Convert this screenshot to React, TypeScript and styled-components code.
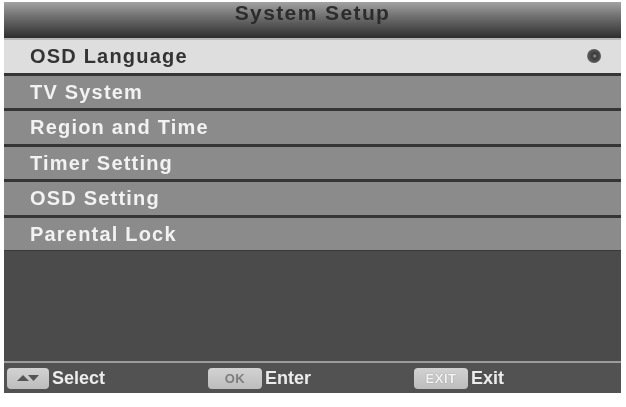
import styled, { createGlobalStyle } from 'styled-components';

const GlobalStyle = createGlobalStyle`
  html, body {
    margin: 0;
    padding: 0;
    background: #ffffff;
  }
  body {
    font-family: "Liberation Sans", Arial, sans-serif;
  }
`;

const Screen = styled.div`
  margin: 2px 0 0 4px;
  width: 617px;
  display: flex;
  flex-direction: column;
  background: #4a4a4a;
  filter: blur(0.5px);
`;

const TitleBar = styled.div`
  height: 36px;
  background: linear-gradient(#a2a2a2 0%, #707070 40%, #444 80%, #2e2e2e 100%);
  border-bottom: 2px solid #b8b8b8;
  text-align: center;
  font-size: 21px;
  font-weight: 700;
  line-height: 22px;
  letter-spacing: 1.4px;
  color: #2c2c2c;
  overflow: hidden;
`;

const MenuList = styled.div`
  display: flex;
  flex-direction: column;
`;

const MenuRow = styled.div<{ $active?: boolean }>`
  height: 32.5px;
  display: flex;
  align-items: center;
  justify-content: space-between;
  padding: 0 19px 0 26px;
  background: ${(p) => (p.$active ? '#dedede' : '#8b8b8b')};
  color: ${(p) => (p.$active ? '#333333' : '#f2f2f2')};
  font-size: 20px;
  font-weight: 700;
  letter-spacing: 1.2px;
  line-height: 32px;

  & + & {
    border-top: 3px solid #353535;
  }
`;

const Body = styled.div`
  height: 110px;
  background: #4b4b4b;
  border-top: 1px solid #3a3a3a;
`;

const Footer = styled.div`
  height: 30px;
  border-top: 2px solid #9c9c9c;
  background: #525252;
  display: grid;
  grid-template-columns: 201px 206px 1fr;
  align-items: center;
  padding-left: 3px;
`;

const Hint = styled.div`
  display: flex;
  align-items: center;
  gap: 3px;
  color: #ececec;
  font-size: 18px;
  font-weight: 700;
`;

const Key = styled.span<{ $dim?: boolean }>`
  width: 54px;
  height: 21px;
  border-radius: 4px;
  background: linear-gradient(#d2d2d2, #bdbdbd);
  display: flex;
  align-items: center;
  justify-content: center;
  color: ${(p) => (p.$dim ? '#7e7e7e' : '#f4f4f4')};
  font-size: 13px;
  font-weight: 700;
  letter-spacing: 0.5px;
  text-shadow: ${(p) => (p.$dim ? 'none' : '0 0 1px #777')};
`;

const ArrowKey = styled(Key)`
  width: 42px;
`;

const Bullet = () => (
  <svg width="16" height="16" viewBox="0 0 16 16" aria-hidden="true">
    <defs>
      <radialGradient id="b" cx="0.55" cy="0.5" r="0.6">
        <stop offset="0" stopColor="#9a9a9a" />
        <stop offset="0.3" stopColor="#3a3a3a" />
        <stop offset="0.8" stopColor="#5a5a5a" />
        <stop offset="1" stopColor="#9a9a9a" />
      </radialGradient>
    </defs>
    <circle cx="8" cy="8" r="7" fill="url(#b)" />
  </svg>
);

const Arrows = () => (
  <svg width="24" height="10" viewBox="0 0 24 10" aria-hidden="true">
    <polygon points="1,8 7,2 13,8" fill="#555" />
    <polygon points="12,2 23,2 17.5,8" fill="#555" />
  </svg>
);

const items = [
  'OSD Language',
  'TV System',
  'Region and Time',
  'Timer Setting',
  'OSD Setting',
  'Parental Lock',
];

export default function App() {
  return (
    <>
      <GlobalStyle />
      <Screen>
        <TitleBar>System Setup</TitleBar>
        <MenuList>
          {items.map((label, i) => (
            <MenuRow key={label} $active={i === 0}>
              <span>{label}</span>
              {i === 0 && <Bullet />}
            </MenuRow>
          ))}
        </MenuList>
        <Body />
        <Footer>
          <Hint>
            <ArrowKey>
              <Arrows />
            </ArrowKey>
            Select
          </Hint>
          <Hint>
            <Key $dim>OK</Key>
            Enter
          </Hint>
          <Hint>
            <Key>EXIT</Key>
            Exit
          </Hint>
        </Footer>
      </Screen>
    </>
  );
}
